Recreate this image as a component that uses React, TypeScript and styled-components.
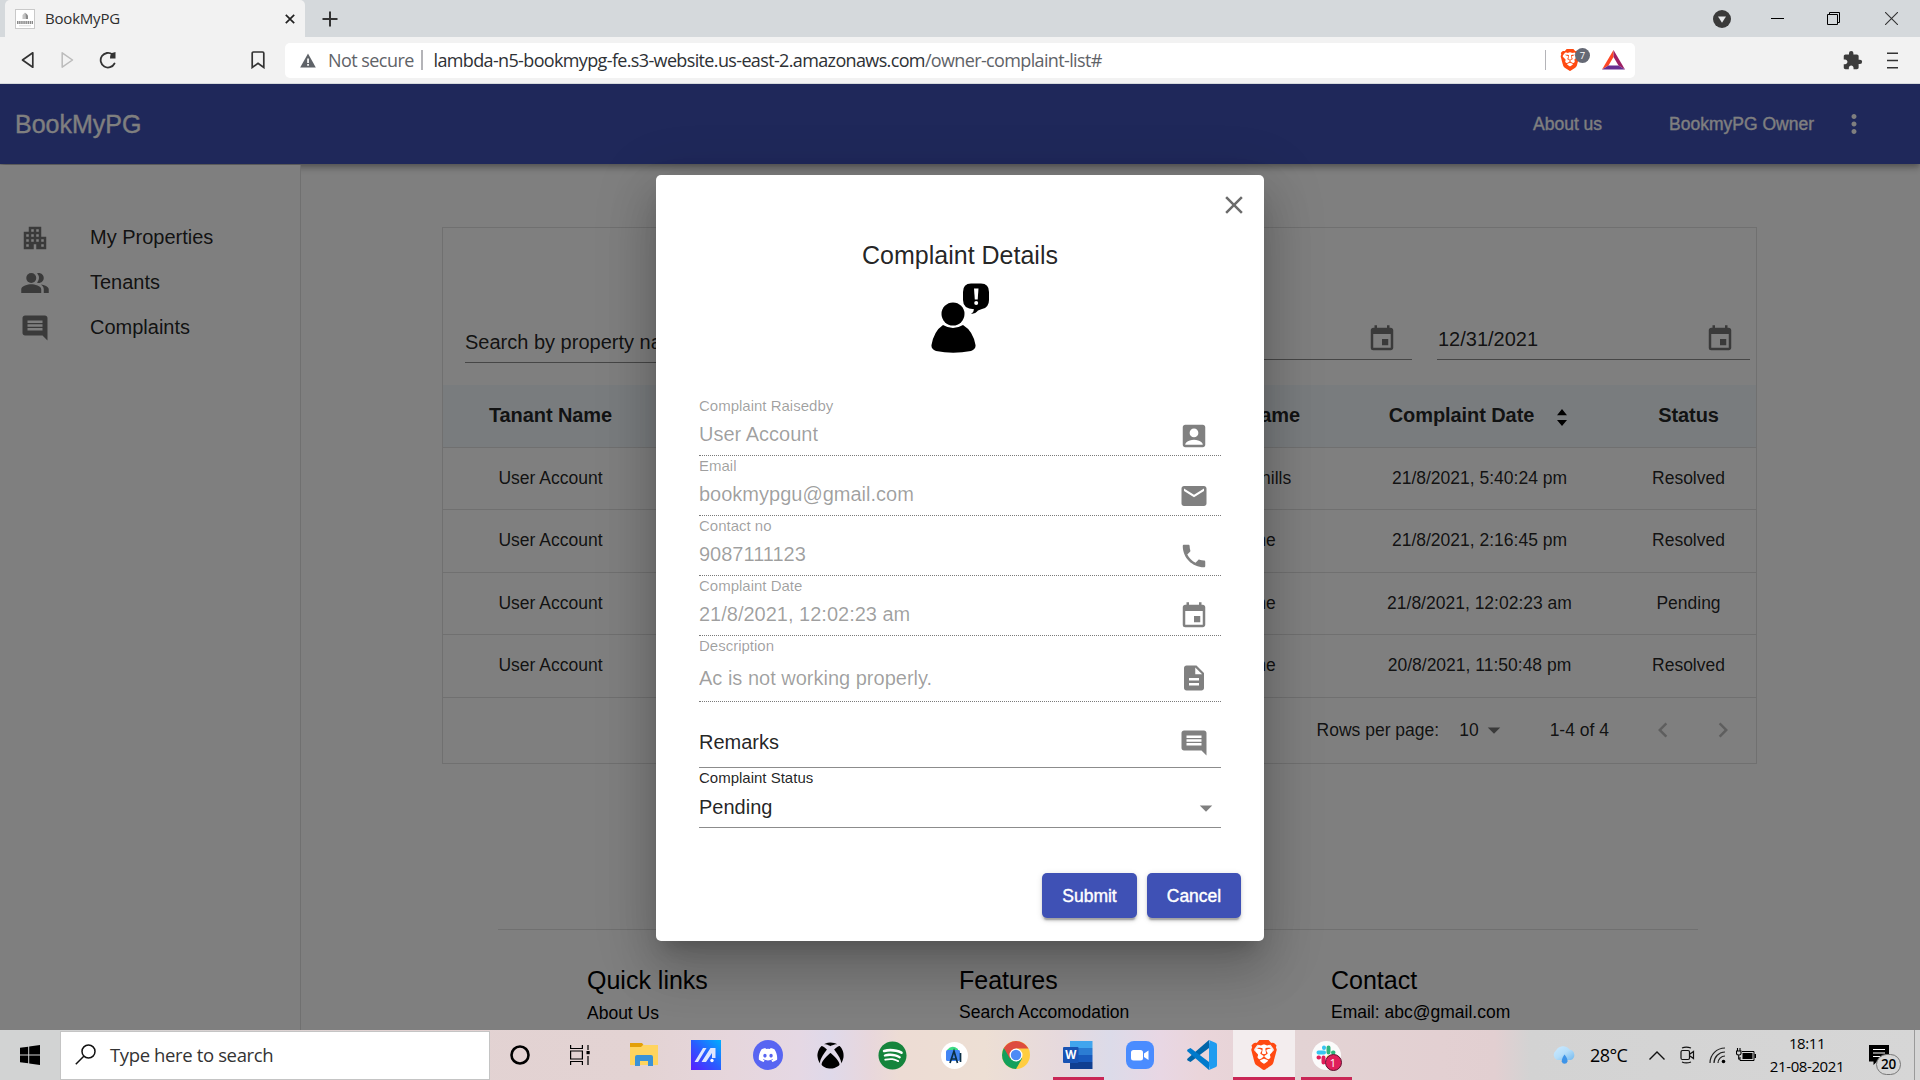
import React from 'react';
import styled, { createGlobalStyle, css } from 'styled-components';
import {
  MdApartment, MdPeopleAlt, MdComment, MdEvent, MdClose, MdAccountBox, MdEmail, MdPhone,
  MdDescription, MdArrowDropDown, MdMoreVert, MdChevronLeft, MdChevronRight, MdExtension,
} from 'react-icons/md';
import { SiBrave } from 'react-icons/si';
import { FaDiscord, FaXbox, FaSpotify } from 'react-icons/fa';

const UI = `"Open Sans", "Noto Sans", sans-serif`;
const PAGE = `"Liberation Sans", Arial, sans-serif`;

const Global = createGlobalStyle`
  *, *::before, *::after { box-sizing: border-box; }
  body { margin: 0; overflow: hidden; background: #fff; }
  svg { display: block; flex: none; }
`;

const Screen = styled.div`
  width: 1920px; height: 1080px; display: flex; flex-direction: column; overflow: hidden;
  font-family: ${PAGE};
`;

/* ---------- browser frame ---------- */
const TabStrip = styled.div`
  height: 37px; flex: none; background: #d5d9dc; display: flex; align-items: center; padding-left: 5px;
`;
const Tab = styled.div`
  width: 300px; height: 37px; background: #f2f2f2; border-radius: 5px 5px 0 0; display: flex;
  align-items: center; padding: 0 10px;
`;
const Favicon = styled.div`
  width: 20px; height: 20px; background: #fff; border: 1px solid #c9c9c9; display: flex;
  align-items: center; justify-content: center;
`;
const TabTitle = styled.div`
  margin-left: 10px; flex: 1; font: 15px/20px ${UI}; letter-spacing: -0.2px; color: #2e2e2e; padding-bottom: 2px;
`;
const NewTab = styled.div`margin-left: 17px; flex: 1;`;
const WindowButtons = styled.div`
  display: flex; align-items: center; padding-right: 22px;
`;
const Spacer = styled.div<{ $w: number }>`width: ${p => p.$w}px; flex: none;`;
const Toolbar = styled.div`
  height: 47px; flex: none; background: #f2f2f2; border-bottom: 1px solid #d5d9dc; display: flex;
  align-items: center; padding: 0 21px;
`;
const AddressBar = styled.div`
  width: 1350px; height: 35px; background: #fff; border-radius: 5px; display: flex; align-items: center;
  padding: 0 10px 0 15px; font: 18px/24px ${UI}; margin-left: 20px;
`;
const NotSecure = styled.span`color: #5f6368; margin-left: 12px; width: 93px; letter-spacing: -0.55px; white-space: nowrap;`;
const Divider = styled.div`width: 1.5px; height: 20px; background: #b4b4b8;`;
const Url = styled.span`color: #2e3135; margin-left: 11px; flex: 1; letter-spacing: -0.64px; white-space: nowrap;`;
const UrlPath = styled.span`color: #5f6368;`;
const ShieldWrap = styled.div`position: relative; width: 22px; height: 24px;`;
const ShieldCount = styled.div`
  position: absolute; left: 15px; top: 0; width: 15px; height: 15px; border-radius: 8px;
  background: #656975; color: #fff; font: 9.5px/15px ${UI}; text-align: center;
`;

/* ---------- web page ---------- */
const Page = styled.div`
  height: 946px; flex: none; position: relative; overflow: hidden; background: #fff;
  display: flex; flex-direction: column; color: rgba(0, 0, 0, 0.87);
`;
const NavBar = styled.div`
  height: 80px; flex: none; background: #3f51b5; color: #fff; display: flex; align-items: center;
  padding: 0 51px 0 15px; z-index: 1;
  box-shadow: 0 2.5px 5px -1px rgba(0,0,0,.2), 0 5px 6px rgba(0,0,0,.14), 0 1px 12px rgba(0,0,0,.12);
`;
const Brand = styled.div`font-size: 25px; line-height: 40px; flex: 1; -webkit-text-stroke: 0.3px #fff;`;
const NavLink = styled.div`
  font-size: 17.5px; line-height: 30px; white-space: nowrap; -webkit-text-stroke: 0.3px #fff;
`;
const Body = styled.div`display: flex; flex: 1; min-height: 0;`;
const Sidebar = styled.div`
  width: 301px; flex: none; border-right: 1px solid #e0e0e0; padding-top: 50px; background: #fff;
  z-index: 2; margin-top: 1px;
`;
const SideItem = styled.div`
  height: 45px; display: flex; align-items: center; padding-left: 20px; gap: 40px; font-size: 20px;
  svg { color: #757575; margin-top: 1px; }
`;
const Main = styled.div`
  flex: 1; display: flex; flex-direction: column; padding: 63px 163px 0 141px;
`;
const Card = styled.div`
  height: 537px; flex: none; border: 1px solid #e0e0e0; display: flex; flex-direction: column;
`;
const Filters = styled.div`
  height: 157px; flex: none; display: flex; align-items: flex-end; padding: 0 6px 25px 22px;
`;
const SearchInput = styled.div`
  width: 313px; height: 45px; border-bottom: 1px solid #8c8c8c; font-size: 20px; line-height: 49px;
  margin-bottom: -3px; white-space: nowrap; overflow: hidden;
`;
const DateInput = styled.div<{ $ml: number }>`
  width: 313px; height: 45px; border-bottom: 1px solid #8c8c8c; margin-left: ${p => p.$ml}px;
  display: flex; align-items: center; padding: 4px 15px 0 1px; font-size: 20px;
  justify-content: space-between;
  svg { color: #757575; }
`;
const Row = styled.div<{ $head?: boolean }>`
  height: 62.5px; flex: none; display: grid; grid-template-columns: 215px 463px 217px 283px 135px;
  align-items: center; text-align: center; border-bottom: 1px solid #e0e0e0; font-size: 17.5px;
  line-height: 25px;
  ${p => p.$head && css`
    background: #f3f8fd; font-size: 20px; font-weight: 700; color: rgba(0,0,0,.87); padding-bottom: 1px;
    letter-spacing: -0.08px;
  `}
`;
const SortHead = styled.div`
  display: flex; justify-content: center; align-items: center; gap: 23px; padding-right: 3px;
  svg { margin-top: 4px; }
`;
const Pager = styled.div`
  flex: 1; display: flex; align-items: center; justify-content: flex-end; font-size: 17.5px; color: rgba(0,0,0,.87);
  padding-right: 18px; white-space: nowrap;
`;
const Footer = styled.div`
  width: 1200px; margin: 165px 0 0 56px; border-top: 1px solid #e0e0e0; display: grid;
  grid-template-columns: 372px 372px 372px; padding: 30px 0 0 89px; color: #000;
`;
const FootTitle = styled.div`font-size: 25px; line-height: 40px;`;
const FootLink = styled.div<{ $gap?: number }>`
  font-size: 17.5px; line-height: 24px; padding-top: ${p => p.$gap || 0}px; white-space: nowrap;
`;

/* ---------- dialog ---------- */
const Backdrop = styled.div`
  position: absolute; inset: 0; background: rgba(0, 0, 0, 0.5); z-index: 10; display: flex;
  justify-content: center; align-items: flex-start; padding-top: 91px;
`;
const Dialog = styled.div`
  width: 608px; height: 766px; background: #fff; border-radius: 5px; display: flex; flex-direction: column;
  box-shadow: 0 13.75px 18.75px -8.75px rgba(0,0,0,.2), 0 30px 47.5px 3.75px rgba(0,0,0,.14),
    0 11.25px 57.5px 10px rgba(0,0,0,.12);
`;
const CloseRow = styled.div`display: flex; justify-content: flex-end; padding: 15px 15px 0 0; color: #6b6b6b;`;
const Title = styled.div`font-size: 25px; line-height: 40px; text-align: center; margin-top: 15px;`;
const Figure = styled.div`display: flex; justify-content: center; padding-top: 8px;`;
const Form = styled.div`margin: 43px 43px 0 43px;`;
const Field = styled.div<{ $h: number; $off?: boolean }>`
  height: ${p => p.$h}px; display: flex; justify-content: space-between;
  border-bottom: 1px ${p => (p.$off ? 'dotted #7a7a7a' : 'solid #8c8c8c')};
  color: ${p => (p.$off ? 'rgba(0,0,0,.38)' : 'rgba(0,0,0,.87)')};
`;
const Label = styled.div`height: 20px; font-size: 15px; line-height: 20px;`;
const Value = styled.div<{ $lh: number }>`font-size: 20px; line-height: ${p => p.$lh}px;`;
const FieldIcon = styled.div<{ $top: number; $right: number }>`
  padding: ${p => p.$top}px ${p => p.$right}px 0 0; color: #808080;
`;
const Actions = styled.div`display: flex; justify-content: flex-end; gap: 10px; padding: 45px 23px 0 0;`;
const Button = styled.div<{ $w: number }>`
  width: ${p => p.$w}px; height: 45px; border-radius: 5px; background: #3f51b5; color: #fff;
  font-size: 17.5px; line-height: 46px; text-align: center; -webkit-text-stroke: 0.4px #fff;
  box-shadow: 0 3.75px 1.25px -2.5px rgba(0,0,0,.2), 0 2.5px 2.5px rgba(0,0,0,.14), 0 1.25px 6.25px rgba(0,0,0,.12);
`;

/* ---------- taskbar ---------- */
const Taskbar = styled.div`
  height: 50px; flex: none; display: flex; align-items: center; font-family: ${UI}; color: #000;
  background: linear-gradient(90deg, #d2d3d3 0, #d2d3d3 60px, #e2d2d2 400px, #e3d3d3 640px, #e6d6dc 730px,
    #e5d8e4 800px, #dfd9ea 830px, #e8d7dc 870px, #eddcd4 900px, #eddfd4 985px, #e6d9dd 1060px, #dcdbe9 1110px,
    #e8d7e4 1160px, #ead5da 1200px, #e3d3d4 1300px, #e3d0d2 1440px, #e2cfd1 1495px, #d3d3d3 1530px, #d6d6d6 1920px);
`;
const Start = styled.div`width: 60px; display: flex; justify-content: center;`;
const SearchBox = styled.div`
  width: 430px; height: 49px; border: 1px solid #c4c4c4; background: #fff; display: flex;
  align-items: center; padding: 0 0 2px 14px; font-size: 18.5px; color: #333; letter-spacing: -0.37px; gap: 14px;
`;
const Slot = styled.div<{ $w?: number; $active?: boolean }>`
  width: ${p => p.$w || 62}px; height: 50px; flex: none; display: flex; align-items: center; justify-content: center;
  background: ${p => (p.$active ? '#f3edee' : 'transparent')};
`;
const OpenSlot = styled(Slot)<{ $line: number }>`
  background-image: linear-gradient(#c92756, #c92756);
  background-repeat: no-repeat; background-position: center bottom; background-size: ${p => p.$line}px 3px;
`;
const Disc = styled.div<{ $d: number; $bg: string }>`
  width: ${p => p.$d}px; height: ${p => p.$d}px; border-radius: 50%; background: ${p => p.$bg}; color: #fff;
  display: flex; align-items: center; justify-content: center; position: relative;
`;
const SlackBadge = styled.div`
  position: absolute; left: 13px; top: 13px; width: 17px; height: 17px; border-radius: 9px; background: #e01e5a;
  border: 1px solid #5d1230; color: #fff; font-size: 11px; line-height: 15px; text-align: center;
`;
const LionWrap = styled.div<{ $w: number; $h: number }>`
  width: ${p => p.$w}px; height: ${p => p.$h}px; color: #ff4a12; display: flex; align-items: center;
  justify-content: center; background: radial-gradient(ellipse 31% 36% at 50% 48%, #fff 98%, transparent 100%);
`;
const Tray = styled.div`margin-left: auto; display: flex; align-items: center; height: 50px;`;
const Temp = styled.div`width: 37px; margin: 0 22px 0 13px; font-size: 18px; letter-spacing: -0.6px; white-space: nowrap;`;
const Clock = styled.div`
  width: 102px; text-align: center; font-size: 15px; line-height: 22.5px; letter-spacing: -0.4px; white-space: nowrap;
  padding-bottom: 1px;
`;
const Notif = styled.div`position: relative; width: 20px; height: 21px;`;
const NotifCount = styled.div`
  position: absolute; left: 7px; top: 9px; width: 25px; height: 21px; border-radius: 11px; background: #d6d6d6;
  border: 1px solid #777; font-size: 13.5px; font-weight: 600; line-height: 19px; text-align: center; letter-spacing: -0.3px;
`;
const ShowDesktop = styled.div`width: 6px; height: 50px; border-left: 1px solid #9a9a9a;`;

/* ---------- drawings ---------- */
const ComplaintFigure = () => (
  <svg width="58" height="70" viewBox="0 0 58 70">
    <ellipse cx="22" cy="31" rx="11.5" ry="11.5" />
    <path d="M12 42 Q22 48 32 42 Q42 48 44.5 62 Q45 66 40 68 Q22 71.500 5 68 Q0 66 0.500 62 Q3 48 12 42Z" />
    <path d="M40 0.500H50Q58 0.500 58 9V17Q58 24.500 51 26L47 27.500Q45 30.500 40 31Q43 29 43 26.300Q32 26 32 17V9Q32 0.500 40 0.500Z" />
    <path d="M43 5.500h4.500l-.8 11h-2.900z" fill="#fff" />
    <circle cx="45.200" cy="20" r="2" fill="#fff" />
  </svg>
);
const SortIcon = () => (
  <svg width="10" height="17" viewBox="0 0 10 17"><path d="M0 6.200L5 0L10 6.200ZM0 11L5 17L10 11Z" fill="#000" /></svg>
);
const Warning = () => (
  <svg width="16" height="15" viewBox="0 0 16 15">
    <path d="M8 .5L15.800 14.500H.2Z" fill="#5f6368" /><path d="M7.200 5.500h1.700v4.500H7.200zM7.200 11h1.700v1.700H7.200z" fill="#fff" />
  </svg>
);
const BatTriangle = () => (
  <svg width="23" height="20" viewBox="0 0 23 20">
    <path d="M11.500 0L0 19.500L6.500 15.500L11.500 7Z" fill="#ff4724" />
    <path d="M11.500 0L23 19.500L16.500 15.500L11.500 7Z" fill="#9e1f63" />
    <path d="M0 19.500H23L16.500 15.500H6.500Z" fill="#662d91" />
  </svg>
);
const Explorer = () => (
  <svg width="28" height="24" viewBox="0 0 28 24">
    <path d="M0 0h12l1.500 2v4H0z" fill="#e3a008" /><path d="M0 4h11l2-2h15v20H0z" fill="#ffd45e" />
    <path d="M5 23V14q0-2 2-2h14q2 0 2 2v9h-5v-5h-8v5z" fill="#3b92d6" />
  </svg>
);
const Armoury = () => (
  <svg width="30" height="30" viewBox="0 0 30 30">
    <defs><linearGradient id="arm" x1="0" y1="1" x2="1" y2="0"><stop offset="0" stopColor="#5a1cff" /><stop offset=".5" stopColor="#2a5cff" /><stop offset="1" stopColor="#00b0ff" /></linearGradient></defs>
    <rect width="30" height="30" fill="url(#arm)" />
    <path d="M3.500 22L12 8h3.500L7 22zM10.500 22L19.500 8h5v10h-3.500v-5L15 22z" fill="#dfe6ff" /><circle cx="21" cy="20.500" r="1.700" fill="#fff" />
  </svg>
);
const AndroidStudio = () => (
  <svg width="20" height="20" viewBox="0 0 20 20">
    <path d="M3 5Q8-1 14 4V8H3z" fill="#3ddc84" /><rect x="2" y="5" width="14" height="11" rx="1.500" fill="#4285f4" />
    <path d="M6 18L10 6L13.500 18M7.500 14H12M16.500 8V17" fill="none" stroke="#0c3045" strokeWidth="1.700" />
  </svg>
);
const Chrome = () => (
  <svg width="28" height="28" viewBox="0 0 28 28">
    <circle cx="14" cy="14" r="14" fill="#ffcd40" />
    <path d="M1.880 7A14 14 0 0 0 14 28L20.060 17.500L14 14Z" fill="#12a05c" />
    <path d="M1.880 7A14 14 0 0 1 26.120 7L26.500 7.500H14L7.940 17.500Z" fill="#dd4b3e" />
    <circle cx="14" cy="14" r="6.500" fill="#fff" /><circle cx="14" cy="14" r="5.200" fill="#4c8bf5" />
  </svg>
);
const Word = () => (
  <svg width="30" height="28" viewBox="0 0 30 28">
    <rect x="7" width="22.500" height="7" fill="#41a5ee" /><rect x="7" y="7" width="22.500" height="7" fill="#2b7cd3" />
    <rect x="7" y="14" width="22.500" height="7" fill="#185abd" /><rect x="7" y="21" width="22.500" height="7" fill="#103f91" />
    <rect y="6" width="15.500" height="16" rx="1" fill="#1853b3" />
    <text x="7.700" y="18" fontSize="11.500" fontWeight="700" fontFamily={UI} textAnchor="middle" fill="#fff">W</text>
  </svg>
);
const ZoomApp = () => (
  <svg width="28" height="28" viewBox="0 0 28 28">
    <rect width="28" height="28" rx="8" fill="#4a8cff" /><rect x="5" y="9" width="12" height="10.500" rx="2.500" fill="#fff" />
    <path d="M18 12.500L22.500 9.500V19L18 16z" fill="#fff" />
  </svg>
);
const VsCode = () => (
  <svg width="30" height="30" viewBox="0 0 30 30">
    <path d="M22 0L22 8L3.500 22L.6 20.400Q-.3 19.500.6 18.600Z" fill="#0065a9" />
    <path d="M22 30V22L3.500 8L.6 9.600Q-.3 10.500.6 11.400Z" fill="#007acc" />
    <path d="M22 0L29 3Q30 3.500 30 5V25Q30 26.500 29 27L22 30Q23 28 22 26V4Q23 2 22 0Z" fill="#1f9cf0" />
  </svg>
);
const Slack = () => (
  <svg width="20" height="20" viewBox="0 0 20 20" strokeWidth="4" strokeLinecap="round">
    <path d="M8 2.500V3M2.500 7.500H8" stroke="#36c5f0" /><path d="M17.500 7.500H17M12.500 2.500V7.500" stroke="#2eb67d" />
    <path d="M12.500 17.500V17M12.500 12.500H17.500" stroke="#ecb22e" /><path d="M2.500 12.500H3M7.500 12.500V17.500" stroke="#e01e5a" />
  </svg>
);
const Weather = () => (
  <svg width="26" height="20" viewBox="0 0 26 20">
    <defs><linearGradient id="cl" x1="0" y1="0" x2="1" y2="1"><stop offset="0" stopColor="#cdeaff" /><stop offset=".5" stopColor="#b5defa" /><stop offset="1" stopColor="#74b9ee" /></linearGradient></defs>
    <path d="M6 15A5.500 5.500 0 0 1 5 5.500A8 8 0 0 1 18.500 4.500A5.500 5.500 0 0 1 20 15Z" fill="url(#cl)" />
    <path d="M13.500 9.500Q17 14 16.500 16.500A3 3 0 0 1 10.700 16.500Q10.500 14 13.500 9.500Z" fill="#3d94e8" />
  </svg>
);

const fields = [
  { label: 'Complaint Raisedby', value: 'User Account', Icon: MdAccountBox, h: 60, lh: 36, top: 25, off: true },
  { label: 'Email', value: 'bookmypgu@gmail.com', Icon: MdEmail, h: 60, lh: 36, top: 25, off: true },
  { label: 'Contact no', value: '9087111123', Icon: MdPhone, h: 60, lh: 36, top: 25, off: true },
  { label: 'Complaint Date', value: '21/8/2021, 12:02:23 am', Icon: MdEvent, h: 60, lh: 36, top: 25, off: true },
  { label: 'Description', value: 'Ac is not working properly.', Icon: MdDescription, h: 66, lh: 44, top: 27, off: true },
  { label: '', value: 'Remarks', Icon: MdComment, h: 66, lh: 40, top: 26, off: false },
  { label: 'Complaint Status', value: 'Pending', Icon: MdArrowDropDown, h: 60, lh: 38, top: 25, off: false },
];

const complaints = [
  ['Green view hills', '21/8/2021, 5:40:24 pm', 'Resolved'],
  ['Rose Home', '21/8/2021, 2:16:45 pm', 'Resolved'],
  ['Rose Home', '21/8/2021, 12:02:23 am', 'Pending'],
  ['Rose Home', '20/8/2021, 11:50:48 pm', 'Resolved'],
];

const BrowserFrame = () => (
  <>
    <TabStrip>
      <Tab>
        <Favicon>
          <svg width="18" height="18" viewBox="0 0 18 18">
            <path d="M6.500 9V5L9 2.500L11.500 5V9Z" fill="#c4c4c4" /><path d="M9.500 3L12 5.500V9H10Z" fill="#8a8a8a" />
            <path d="M1 12.500H17" stroke="#8a8a8a" strokeWidth="3" strokeDasharray="1.500 .6" /><path d="M3 15.800H15" stroke="#ddd" />
          </svg>
        </Favicon>
        <TabTitle>BookMyPG</TabTitle>
        <svg width="10" height="10" viewBox="0 0 10 10"><path d="M.8.8L9.200 9.200M9.200.8L.8 9.200" stroke="#222" strokeWidth="1.700" /></svg>
      </Tab>
      <NewTab>
        <svg width="16" height="16" viewBox="0 0 16 16"><path d="M8 .5V15.500M.5 8H15.500" stroke="#333" strokeWidth="2" /></svg>
      </NewTab>
      <WindowButtons>
        <svg width="18" height="18" viewBox="0 0 18 18"><circle cx="9" cy="9" r="9" fill="#3a3a3a" /><path d="M5 6.500H13L9 12.800Z" fill="#e6e8ea" /></svg>
        <Spacer $w={40} />
        <svg width="13" height="13" viewBox="0 0 13 13"><path d="M0 6.500H13" stroke="#000" /></svg>
        <Spacer $w={43} />
        <svg width="13" height="13" viewBox="0 0 13 13"><path d="M.5 2.500H10.500V12.500H.5ZM2.500 2.500V.5H12.500V10.500H10.500" fill="none" stroke="#000" /></svg>
        <Spacer $w={45} />
        <svg width="13" height="13" viewBox="0 0 13 13"><path d="M0 0L13 13M13 0L0 13" stroke="#333" strokeWidth="1.100" /></svg>
      </WindowButtons>
    </TabStrip>
    <Toolbar>
      <svg width="13" height="18" viewBox="0 0 13 18"><path d="M11.800 1.800V16.200L1.500 9Z" fill="none" stroke="#333" strokeWidth="1.700" strokeLinejoin="round" /></svg>
      <Spacer $w={27} />
      <svg width="13" height="18" viewBox="0 0 13 18"><path d="M1.200 1.800V16.200L11.500 9Z" fill="none" stroke="#bbb" strokeWidth="1.500" strokeLinejoin="round" /></svg>
      <Spacer $w={25} />
      <svg width="18" height="18" viewBox="0 0 18 18"><path d="M13.500 3.500A7.300 7.300 0 1 0 15.500 12.500" fill="none" stroke="#333" strokeWidth="1.800" strokeLinecap="round" /><path d="M16.500 1V7.500H11Q11 3 13 2Z" fill="#333" /></svg>
      <Spacer $w={134} />
      <svg width="14" height="18" viewBox="0 0 14 18"><path d="M1.200 2.200Q1.200 1 2.400 1H11.600Q12.800 1 12.800 2.200V16.500L7 12.300L1.200 16.500Z" fill="none" stroke="#333" strokeWidth="1.700" /></svg>
      <AddressBar>
        <Warning />
        <NotSecure>Not secure</NotSecure>
        <Divider />
        <Url>lambda-n5-bookmypg-fe.s3-website.us-east-2.amazonaws.com<UrlPath>/owner-complaint-list#</UrlPath></Url>
        <Divider />
        <Spacer $w={14} />
        <ShieldWrap>
          <LionWrap $w={20} $h={24}><SiBrave size={22} /></LionWrap>
          <ShieldCount>7</ShieldCount>
        </ShieldWrap>
        <Spacer $w={20} />
        <BatTriangle />
      </AddressBar>
      <Spacer $w={207} />
      <MdExtension size={21} color="#3c3c3c" />
      <Spacer $w={24} />
      <svg width="12" height="17" viewBox="0 0 12 17"><path d="M0 1.200H11M0 8.500H11M0 15.800H11" stroke="#333" strokeWidth="1.600" /></svg>
    </Toolbar>
  </>
);

const ComplaintDialog = () => (
  <Backdrop>
    <Dialog>
      <CloseRow><MdClose size={30} /></CloseRow>
      <Title>Complaint Details</Title>
      <Figure><ComplaintFigure /></Figure>
      <Form>
        {fields.map(({ label, value, Icon, h, lh, top, off }) => (
          <Field key={value} $h={h} $off={off}>
            <div>
              <Label>{label}</Label>
              <Value $lh={lh}>{value}</Value>
            </div>
            <FieldIcon $top={top} $right={value === 'Pending' ? 0 : 12}><Icon size={30} /></FieldIcon>
          </Field>
        ))}
      </Form>
      <Actions>
        <Button $w={95}>Submit</Button>
        <Button $w={94}>Cancel</Button>
      </Actions>
    </Dialog>
  </Backdrop>
);

const WindowsTaskbar = () => (
  <Taskbar>
    <Start>
      <svg width="20" height="20" viewBox="0 0 20 20"><path d="M0 2.800L8.200 1.700V9.500H0ZM9.200 1.500L20 0V9.500H9.200ZM0 10.500H8.200V18.300L0 17.200ZM9.200 10.500H20V20L9.200 18.500Z" /></svg>
    </Start>
    <SearchBox>
      <svg width="21" height="21" viewBox="0 0 21 21"><circle cx="13.500" cy="7.500" r="6.500" fill="none" stroke="#111" strokeWidth="1.500" /><path d="M8.800 12.200L.8 20.200" stroke="#111" strokeWidth="1.500" /></svg>
      Type here to search
    </SearchBox>
    <Slot $w={60}><svg width="20" height="20" viewBox="0 0 20 20"><circle cx="10" cy="10" r="8.500" fill="none" stroke="#000" strokeWidth="2.600" /></svg></Slot>
    <Slot $w={60}>
      <svg width="20" height="20" viewBox="0 0 20 20"><path d="M.6 0V3.500H12.400V0M.6 20V16.500H12.400V20M.6 6H12.400V14H.6ZM18 0V5M18 11V20" fill="none" stroke="#000" strokeWidth="1.200" /><rect x="16.500" y="6" width="3.200" height="3.200" /></svg>
    </Slot>
    <Spacer $w={3} />
    <Slot><Explorer /></Slot>
    <Slot><Armoury /></Slot>
    <Slot><Disc $d={30} $bg="#5865f2"><FaDiscord size={20} /></Disc></Slot>
    <Slot><FaXbox size={27} /></Slot>
    <Slot><Disc $d={29} $bg="radial-gradient(#fff 60%, transparent 62%)"><FaSpotify size={29} color="#15843c" /></Disc></Slot>
    <Slot><Disc $d={27} $bg="#fff"><AndroidStudio /></Disc></Slot>
    <Slot><Chrome /></Slot>
    <OpenSlot $line={51}><Word /></OpenSlot>
    <Slot><ZoomApp /></Slot>
    <Slot><VsCode /></Slot>
    <OpenSlot $line={62} $active><LionWrap $w={28} $h={30}><SiBrave size={30} /></LionWrap></OpenSlot>
    <OpenSlot $line={51}><Disc $d={29} $bg="#fbfbfb"><Slack /><SlackBadge>1</SlackBadge></Disc></OpenSlot>
    <Tray>
      <Weather />
      <Temp>28°C</Temp>
      <svg width="16" height="9" viewBox="0 0 16 9"><path d="M.5 8.500L8 1L15.500 8.500" fill="none" stroke="#111" strokeWidth="1.400" /></svg>
      <Spacer $w={15} />
      <svg width="16" height="18" viewBox="0 0 16 18"><path d="M2.500 4.500H8Q9.500 4.500 9.500 6V12Q9.500 13.500 8 13.500H2.500Q1 13.500 1 12V6Q1 4.500 2.500 4.500ZM10 8L13.500 5.500V12.500L10 10M2 2Q6 .2 11 2M2 16Q6 17.800 11 16" fill="none" stroke="#111" strokeWidth="1.200" /></svg>
      <Spacer $w={13} />
      <svg width="17" height="17" viewBox="0 0 17 17"><path d="M1 16A15 15 0 0 1 16 1M5 16A11 11 0 0 1 16 5M9 16A7 7 0 0 1 16 9" fill="none" stroke="#222" strokeWidth="1.200" /><circle cx="14.500" cy="14.500" r="1.800" /></svg>
      <Spacer $w={10} />
      <svg width="20" height="15" viewBox="0 0 20 15"><path d="M6 3.500H18V12.500H4V9" fill="none" stroke="#000" /><rect x="6.500" y="5" width="10" height="6" /><rect x="18.500" y="6" width="1.500" height="4" /><path d="M1.500 0V3M4 0V3M.5 3H5V5.500Q5 7 3 7Q.5 7 .5 5.500ZM2.700 7V11H4" fill="none" stroke="#000" strokeWidth="1.100" /></svg>
      <Clock><div>18:11</div><div>21-08-2021</div></Clock>
      <Spacer $w={11} />
      <Notif>
        <svg width="20" height="21" viewBox="0 0 20 21"><path d="M0 0H20V16.500H8L4.500 20V16.500H0Z" /><path d="M4 4.500H16M4 8H16M4 11.500H11" stroke="#fff" strokeWidth="1.200" /></svg>
        <NotifCount>20</NotifCount>
      </Notif>
      <Spacer $w={25} />
      <ShowDesktop />
    </Tray>
  </Taskbar>
);

export default function App() {
  return (
    <Screen>
      <Global />
      <BrowserFrame />
      <Page>
        <NavBar>
          <Brand>BookMyPG</Brand>
          <NavLink>About us</NavLink>
          <Spacer $w={67} />
          <NavLink>BookmyPG Owner</NavLink>
          <Spacer $w={25} />
          <MdMoreVert size={30} />
        </NavBar>
        <Body>
          <Sidebar>
            <SideItem><MdApartment size={30} />My Properties</SideItem>
            <SideItem><MdPeopleAlt size={30} />Tenants</SideItem>
            <SideItem><MdComment size={30} />Complaints</SideItem>
          </Sidebar>
          <Main>
            <Card>
              <Filters>
                <SearchInput>Search by property name</SearchInput>
                <DateInput $ml={321}><span /><MdEvent size={30} /></DateInput>
                <DateInput $ml={25}>12/31/2021<MdEvent size={30} /></DateInput>
              </Filters>
              <Row $head>
                <div>Tanant Name</div><div /><div>Property Name</div>
                <SortHead>Complaint Date<SortIcon /></SortHead>
                <div>Status</div>
              </Row>
              {complaints.map(([property, date, status]) => (
                <Row key={date}>
                  <div>User Account</div><div /><div>{property}</div><div>{date}</div><div>{status}</div>
                </Row>
              ))}
              <Pager>
                Rows per page:<Spacer $w={20} />10<MdArrowDropDown size={30} color="#757575" />
                <Spacer $w={41} />1-4 of 4<Spacer $w={39} />
                <MdChevronLeft size={30} color="#bdbdbd" /><Spacer $w={30} /><MdChevronRight size={30} color="#bdbdbd" />
              </Pager>
            </Card>
            <Footer>
              <div><FootTitle>Quick links</FootTitle><FootLink $gap={1}>About Us</FootLink></div>
              <div><FootTitle>Features</FootTitle><FootLink>Search Accomodation</FootLink></div>
              <div><FootTitle>Contact</FootTitle><FootLink>Email: abc@gmail.com</FootLink></div>
            </Footer>
          </Main>
        </Body>
        <ComplaintDialog />
      </Page>
      <WindowsTaskbar />
    </Screen>
  );
}
